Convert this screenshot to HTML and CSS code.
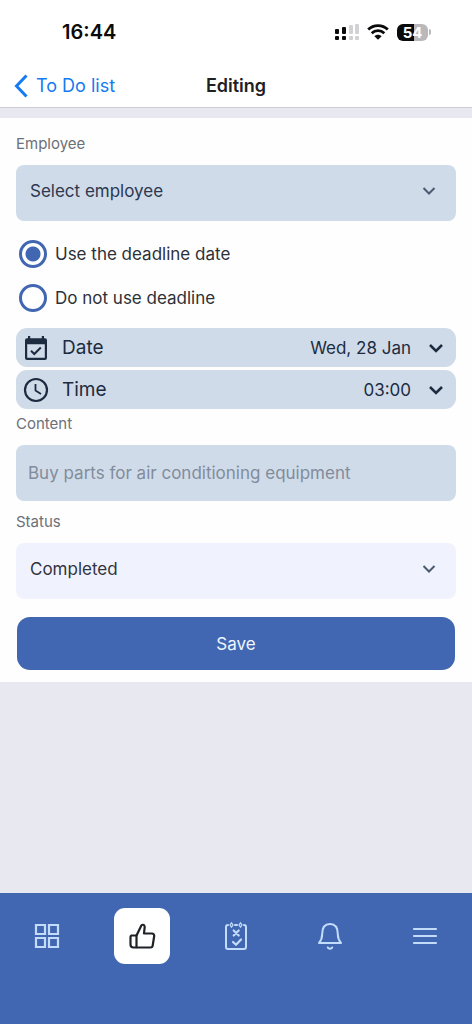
FILE: index.html
```html
<!DOCTYPE html>
<html lang="en">
<head>
<meta charset="utf-8">
<meta name="viewport" content="width=device-width, initial-scale=1">
<title>Editing</title>
<link rel="stylesheet" href="styles.css">
</head>
<body>
<div class="status-bar">
  <time class="clock">16:44</time>
  <div class="indicators">
    <svg class="signal" viewBox="0 0 24 17" aria-hidden="true">
      <g fill="#0b0b0b"><rect x="0" y="5" width="4" height="5" rx="1"/><rect x="7" y="3" width="4" height="7" rx="1"/><rect x="0" y="12" width="4" height="4" rx="1"/><rect x="7" y="12" width="4" height="4" rx="1"/></g>
      <g fill="#d2d2d4"><rect x="14" y="1" width="4" height="9" rx="1"/><rect x="20" y="0" width="4" height="10" rx="1"/><rect x="14" y="12" width="4" height="4" rx="1"/><rect x="20" y="12" width="4" height="4" rx="1"/></g>
    </svg>
    <svg class="wifi" viewBox="0 0 22 16" aria-hidden="true">
      <g fill="none" stroke="#0b0b0b" stroke-width="2.8"><path d="M1.2 5.6C6.6 .2 15.4 .2 20.8 5.6"/><path d="M4.7 9.3c3.5-3.5 9.1-3.5 12.6 0"/></g>
      <path d="M11 15.8 7.4 12.3c2-2 5.2-2 7.2 0z" fill="#0b0b0b"/>
    </svg>
    <div class="battery"><span class="battery-level">54</span><span class="battery-cap"></span></div>
  </div>
</div>
<header class="nav-bar">
  <a class="back" href="#todo">
    <svg class="back-icon" viewBox="0 0 14 24" aria-hidden="true"><path d="M12.5 1.5 2.5 12l10 10.5" fill="none" stroke="currentColor" stroke-width="3"/></svg>
    To Do list
  </a>
  <h1 class="title">Editing</h1>
</header>
<main class="content">
  <form class="card">
    <label class="label" for="employee">Employee</label>
    <div class="select-wrap">
      <select class="field select" id="employee"><option>Select employee</option></select>
      <svg class="select-arrow" viewBox="0 0 14 10" aria-hidden="true"><path d="m1.5 2 5.5 5.5L12.5 2"/></svg>
    </div>
    <div class="radios">
      <label class="radio-row"><input class="radio" type="radio" name="deadline" checked>Use the deadline date</label>
      <label class="radio-row"><input class="radio" type="radio" name="deadline">Do not use deadline</label>
    </div>
    <div class="pickers">
      <button class="picker" type="button">
        <svg class="picker-icon" viewBox="0 0 26 26" aria-hidden="true">
          <path fill="currentColor" fill-rule="evenodd" d="M5 1h2.2v2.2h11.6V1H21v2.2h1a2 2 0 0 1 2 2V23a2 2 0 0 1-2 2H4a2 2 0 0 1-2-2V5.2a2 2 0 0 1 2-2h1zM4.2 9.2v13.6h17.6V9.2z"/>
          <path d="m8 15.8 3.3 3.2 6.5-6.5" fill="none" stroke="currentColor" stroke-width="2"/>
        </svg>
        <span class="picker-name">Date</span>
        <span class="picker-value">Wed, 28 Jan</span>
        <svg class="picker-arrow" viewBox="0 0 16 10" aria-hidden="true"><path d="m2 2 6 6 6-6"/></svg>
      </button>
      <button class="picker" type="button">
        <svg class="picker-icon" viewBox="0 0 26 26" aria-hidden="true"><g fill="none" stroke="currentColor" stroke-width="2.2"><circle cx="13" cy="13" r="11"/><path d="M12.5 7v6.500l5.500 3.500" stroke-width="1.8"/></g></svg>
        <span class="picker-name">Time</span>
        <span class="picker-value">03:00</span>
        <svg class="picker-arrow" viewBox="0 0 16 10" aria-hidden="true"><path d="m2 2 6 6 6-6"/></svg>
      </button>
    </div>
    <label class="label" for="text">Content</label>
    <input class="field text-field" id="text" type="text" placeholder="Buy parts for air conditioning equipment">
    <label class="label label-status" for="status">Status</label>
    <div class="select-wrap">
      <select class="field select select-light" id="status"><option>Completed</option></select>
      <svg class="select-arrow" viewBox="0 0 14 10" aria-hidden="true"><path d="m1.5 2 5.5 5.5L12.5 2"/></svg>
    </div>
    <button class="save" type="submit">Save</button>
  </form>
</main>
<nav class="tab-bar">
  <a class="tab" href="#home" aria-label="Dashboard">
    <svg class="tab-icon" viewBox="0 0 28 28" aria-hidden="true"><g fill="none" stroke="currentColor" stroke-width="2.2"><path d="M3 3h9v9H3zM16 3h9v9h-9zM3 16h9v9H3zM16 16h9v9h-9z"/></g></svg>
  </a>
  <a class="tab tab-active" href="#tasks" aria-label="Approvals" aria-current="page">
    <svg class="tab-icon" viewBox="0 0 28 28" aria-hidden="true"><g fill="none" stroke="currentColor" stroke-width="2.2" stroke-linejoin="round"><path d="M8.500 13.500 13 4.200C13.600 2.200 16.500 2.200 16.700 4.800L16 11.500h8a2.200 2.200 0 0 1 2.200 2.500l-1.500 9.500a2.200 2.200 0 0 1-2.200 2H8.500"/><path d="M3.500 13.500h5v12h-3a3 3 0 0 1-3-3V15a1.500 1.500 0 0 1 1-1.500z"/></g></svg>
  </a>
  <a class="tab" href="#checklist" aria-label="Checklist">
    <svg class="tab-icon" viewBox="0 0 28 28" aria-hidden="true"><g fill="none" stroke="currentColor" stroke-width="2" stroke-linecap="round" stroke-linejoin="round"><path d="M6 3a2 2 0 0 0-2 2v20a2 2 0 0 0 2 2h16a2 2 0 0 0 2-2V5a2 2 0 0 0-2-2"/><path d="M13 3h2"/><path d="M9.500 .8 8 3l1.500 2.200L11 3zM18.500 .8 17 3l1.500 2.200L20 3z" stroke-width="1.3"/><path d="m11.700 8.500 5 5m0-5-5 5M11 20l3 2.800 5-5.300" stroke-width="2.2"/></g></svg>
  </a>
  <a class="tab" href="#alerts" aria-label="Notifications">
    <svg class="tab-icon" viewBox="0 0 28 28" aria-hidden="true"><g fill="none" stroke="currentColor" stroke-width="2" stroke-linecap="round" stroke-linejoin="round"><path d="M3 21c2.200-2.600 3.200-5 3.200-9C6.200 5.500 9 2 14 2s7.800 3.500 7.800 10c0 4 1 6.400 3.200 9z"/><path d="M11.800 25.500c.8 1.500 3.600 1.500 4.400 0"/></g></svg>
  </a>
  <a class="tab" href="#menu" aria-label="Menu">
    <svg class="tab-icon" viewBox="0 0 28 28" aria-hidden="true"><path d="M3 7h22M3 14h22M3 21h22" stroke="currentColor" stroke-width="2.2" stroke-linecap="round"/></svg>
  </a>
</nav>
</body>
</html>
```

FILE: styles.css
```css
* {
  box-sizing: border-box;
}

body {
  margin: 0;
  min-height: 100vh;
  display: flex;
  flex-direction: column;
  background: #e8e9f0;
  color: #2d3038;
  font-family: Inter, "Liberation Sans", sans-serif;
  font-size: 17px;
}

button,
input,
select {
  font: inherit;
  color: inherit;
  margin: 0;
}

.status-bar {
  display: flex;
  justify-content: space-between;
  align-items: center;
  height: 64px;
  padding: 0 41px 0 62px;
  background: #fff;
}

.clock {
  color: #0b0b0b;
  font-size: 20px;
  font-weight: 600;
}

.indicators {
  display: flex;
  align-items: center;
  gap: 8px;
}

.signal {
  width: 24px;
  height: 17px;
}

.wifi {
  width: 22px;
  height: 16px;
}

.battery {
  display: flex;
  align-items: center;
  gap: 1px;
}

.battery-level {
  width: 31px;
  border-radius: 6px;
  background: linear-gradient(90deg, #0b0b0b 54%, #b9b9bb 54%);
  color: #fff;
  font-size: 15px;
  font-weight: 700;
  line-height: 17px;
  text-align: center;
}

.battery-cap {
  width: 2px;
  height: 6px;
  border-radius: 0 2px 2px 0;
  background: #b9b9bb;
}

.nav-bar {
  display: grid;
  grid-template-columns: 1fr auto 1fr;
  align-items: center;
  height: 44px;
  padding: 0 14px;
  border-bottom: 1px solid #cccdd4;
  background: #fff;
}

.back {
  display: flex;
  align-items: center;
  gap: 8px;
  color: #167af3;
  font-size: 18px;
  text-decoration: none;
}

.back-icon {
  width: 14px;
  height: 24px;
}

.title {
  margin: 0;
  color: #1f2024;
  font-size: 18px;
  font-weight: 600;
}

.content {
  flex: 1;
  padding-top: 10px;
}

.card {
  display: flex;
  flex-direction: column;
  padding: 16px 16px 12px;
  background: #fefefe;
}

.label {
  margin-bottom: 11px;
  color: #6c7078;
  font-size: 15px;
  line-height: 20px;
}

.label-status {
  margin-top: 11px;
}

.select-wrap {
  display: grid;
  align-items: center;
}

.select-wrap > * {
  grid-area: 1 / 1;
}

.field {
  width: 100%;
  height: 56px;
  border: 0;
  border-radius: 8px;
  background: #d0dbe9;
}

.select {
  appearance: none;
  padding: 0 44px 4px 14px;
  color: #2b3850;
}

.select-light {
  background: #f0f3fe;
  color: #30343f;
}

.select-arrow {
  justify-self: end;
  width: 14px;
  height: 10px;
  margin: 0 20px 4px 0;
  fill: none;
  stroke: #4a5b70;
  stroke-width: 2;
  pointer-events: none;
}

.radios {
  display: flex;
  flex-direction: column;
  margin: 11px 0 8px;
}

.radio-row {
  display: flex;
  align-items: center;
  gap: 8px;
  height: 44px;
  padding-left: 3px;
}

.radio {
  appearance: none;
  width: 28px;
  height: 28px;
  border: 3px solid #4267b2;
  border-radius: 50%;
  background: #fff;
}

.radio:checked {
  background: radial-gradient(circle, #4267b2 7px, #fff 8px);
}

.pickers {
  display: flex;
  flex-direction: column;
  gap: 3px;
  margin-bottom: 5px;
}

.picker {
  display: flex;
  align-items: center;
  height: 39px;
  padding: 0 12px 0 7px;
  border: 0;
  border-radius: 11px;
  background: #d0dbe9;
  color: #1c2b40;
}

.picker-icon {
  width: 26px;
  height: 26px;
}

.picker-name {
  flex: 1;
  margin-left: 13px;
  font-size: 19px;
  text-align: left;
}

.picker-arrow {
  width: 16px;
  height: 10px;
  margin-left: 17px;
  fill: none;
  stroke: currentColor;
  stroke-width: 2.5;
}

.text-field {
  padding: 0 12px;
}

.text-field::placeholder {
  color: #808c9c;
  opacity: 1;
}

.save {
  height: 53px;
  margin: 18px 1px 0;
  border: 0;
  border-radius: 13px;
  background: #4267b2;
  color: #eef6ff;
}

.tab-bar {
  display: flex;
  justify-content: space-around;
  height: 131px;
  padding-top: 15px;
  background: #4267b2;
}

.tab {
  display: flex;
  align-items: center;
  justify-content: center;
  width: 56px;
  height: 56px;
  border-radius: 11px;
  color: #c3dcfa;
}

.tab-active {
  background: #fff;
  color: #1e2126;
}

.tab-icon {
  width: 28px;
  height: 28px;
}
```
